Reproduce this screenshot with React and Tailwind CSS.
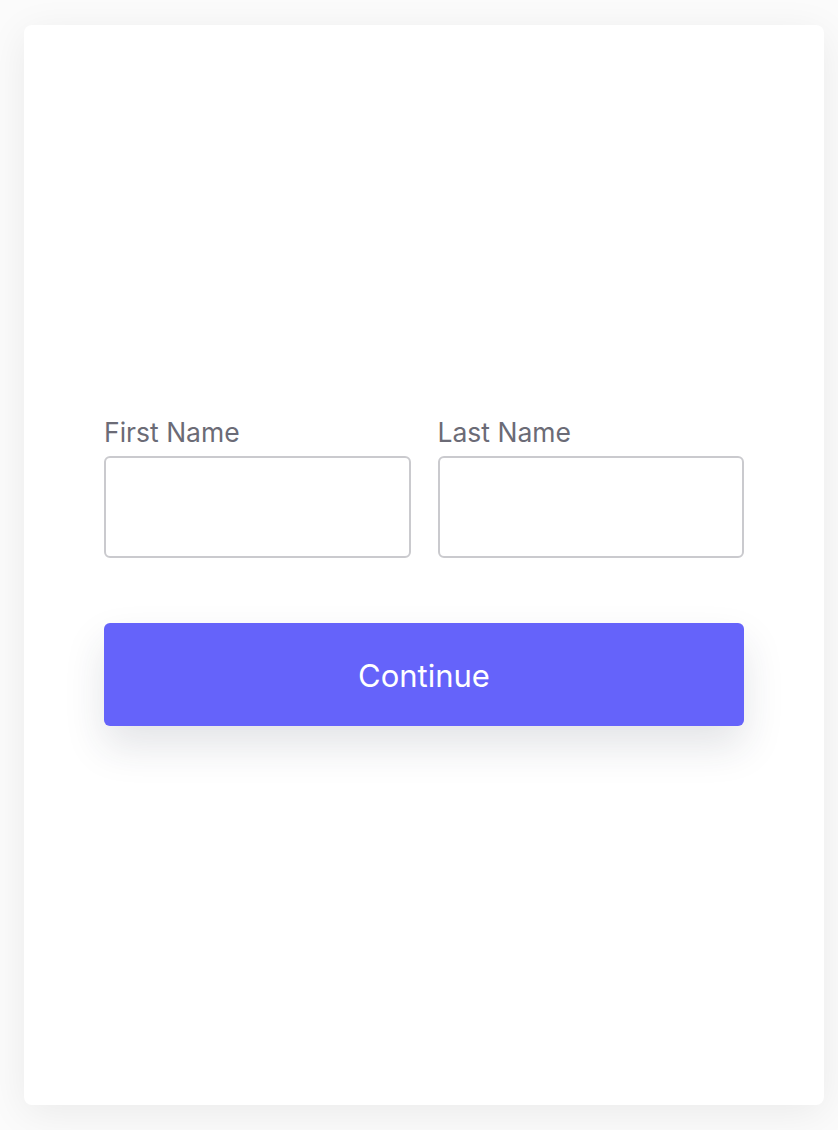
export default function App() {
  return (
    <div className="min-h-[1130px] w-full bg-[#fbfbfb] px-[24px] pt-[25px] pb-[25px]" style={{ fontFamily: 'Inter, "Noto Sans", sans-serif' }}>
      <div className="flex h-[1080px] w-[800px] flex-col items-center justify-center rounded-[8px] bg-white px-[80px] pt-[14px] shadow-[0_8px_40px_rgba(0,0,0,0.07)]">
        <div className="w-full">
          <div className="grid grid-cols-2 gap-[27px]">
            <label className="flex flex-col">
              <span className="mb-[11px] text-[26.5px] leading-[26px] text-[#6b6b76]">First Name</span>
              <input className="h-[102px] w-full rounded-[6px] border-2 border-[#cacace] bg-white outline-none" />
            </label>
            <label className="flex flex-col">
              <span className="mb-[11px] text-[26.5px] leading-[26px] text-[#6b6b76]">Last Name</span>
              <input className="h-[102px] w-full rounded-[6px] border-2 border-[#cacace] bg-white outline-none" />
            </label>
          </div>
          <button className="mt-[65px] flex h-[103px] w-full items-center justify-center rounded-[6px] bg-[#6563fa] pt-[4px] text-[31px] text-white shadow-[0_20px_40px_rgba(40,50,70,0.13)]">
            Continue
          </button>
        </div>
      </div>
    </div>
  );
}
